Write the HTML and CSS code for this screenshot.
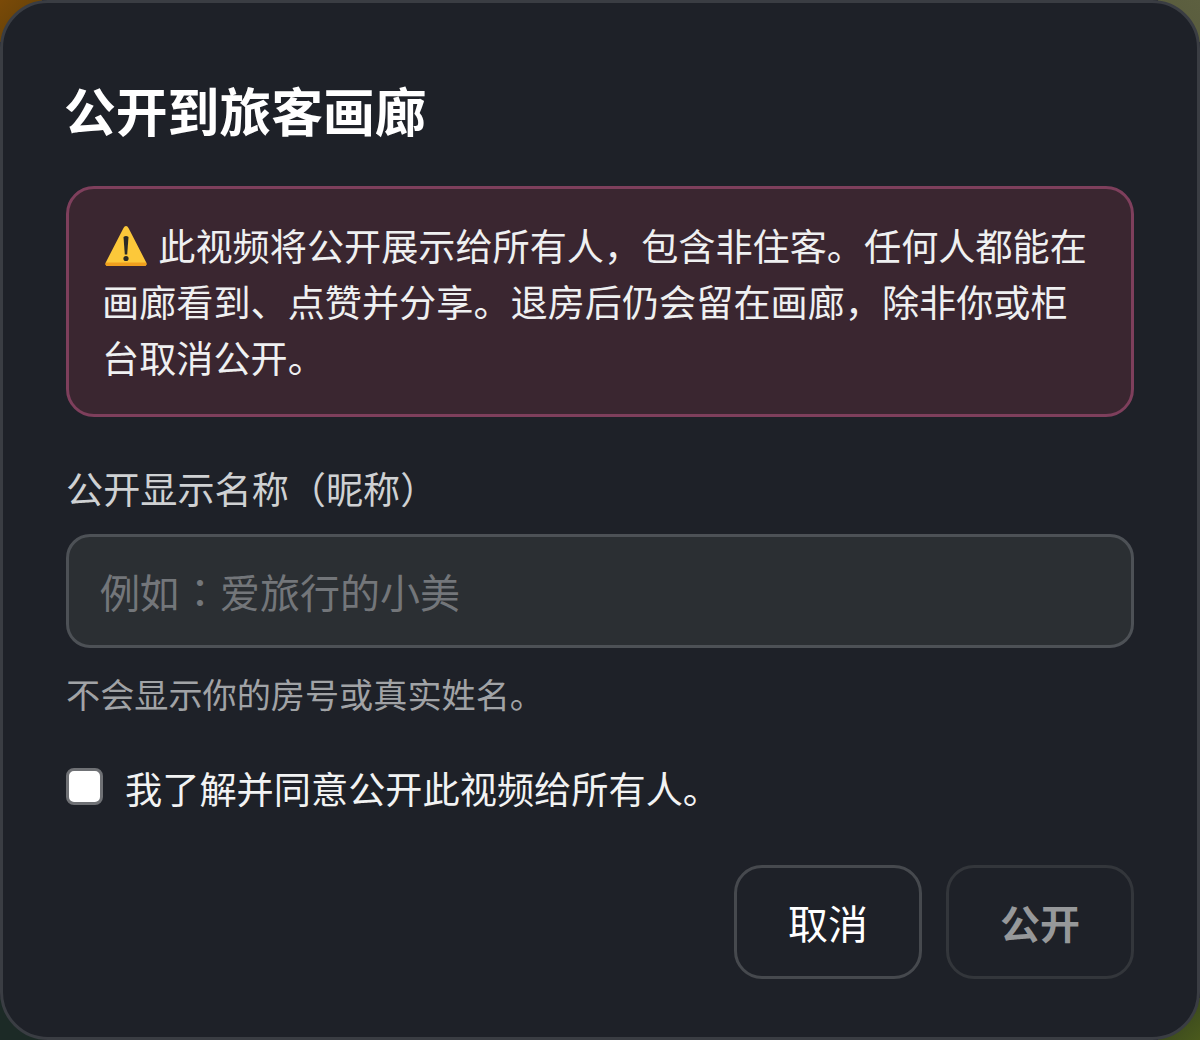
FILE: index.html
```html
<!DOCTYPE html>
<html lang="zh-CN">
<head>
    <meta charset="UTF-8">
    <meta name="viewport" content="width=device-width, initial-scale=1.0">
    <title>公开到旅客画廊</title>
    <link rel="stylesheet" href="styles.css">
</head>
<body>
    <div class="modal">
        <h2 class="modal-title">公开到旅客画廊</h2>

        <!-- Warning -->
        <div class="warning">
            <svg class="warning-icon" viewBox="0 0 42 42" aria-hidden="true">
                <path d="M21 1 Q22.5 1 23.5 3 L41 37 Q42.5 41 39 41 L3 41 Q-0.5 41 1 37 L18.5 3 Q19.5 1 21 1 Z" fill="#fcc83a"/>
                <path d="M0.8 37.5 Q-0.5 41 3 41 L39 41 Q42.5 41 41.2 37.5 Z" fill="#ef9f1e"/>
                <path d="M18.5 12 Q21 10 23.5 12 L22.2 29.5 L19.8 29.5 Z" fill="#2c2a26"/>
                <circle cx="21" cy="33.5" r="2.6" fill="#2c2a26"/>
            </svg>
            此视频将公开展示给所有人，包含非住客。任何人都能在画廊看到、点赞并分享。退房后仍会留在画廊，除非你或柜台取消公开。
        </div>

        <label class="field-label" for="nickname">公开显示名称（昵称）</label>
        <input id="nickname" class="field-input" lang="zh-TW" type="text" placeholder="例如：爱旅行的小美">
        <p class="field-hint">不会显示你的房号或真实姓名。</p>

        <label class="agree">
            <span class="agree-box"></span>
            <span>我了解并同意公开此视频给所有人。</span>
        </label>

        <div class="actions">
            <button class="btn">取消</button>
            <button class="btn btn-disabled">公开</button>
        </div>
    </div>
</body>
</html>
```

FILE: styles.css
```css
html, body {
    margin: 0;
    padding: 0;
    height: 100%;
}
body {
    font-family: "Liberation Sans", "Noto Sans CJK SC", sans-serif;
    background:
        linear-gradient(135deg, #7a4a08 0, #6b4408 30px, transparent 30px),
        linear-gradient(225deg, #5d6040 0, #5a5d3e 30px, transparent 30px),
        linear-gradient(45deg, #1c2a26 0, #1c2a26 30px, transparent 30px),
        linear-gradient(315deg, #4a5a1c 0, #3c4a1e 30px, transparent 30px),
        #1e2128;
}
.modal {
    box-sizing: border-box;
    width: 1200px;
    height: 1040px;
    padding: 83px 63px 0;
    background: #1e2128;
    border: 3px solid #3a3d43;
    border-radius: 48px;
    color: #fff;
}
.modal-title {
    margin: 0 0 44px -2px;
    font-size: 51.8px;
    line-height: 56px;
    font-weight: 700;
}
.warning {
    box-sizing: border-box;
    height: 231px;
    padding: 31px 33px 0;
    background: #3a2630;
    border: 3px solid #7e3f5c;
    border-radius: 28px;
    font-size: 37.15px;
    line-height: 56px;
    color: #eff0f1;
}
.warning-icon {
    width: 42px;
    height: 42px;
    margin: 0 1px 0 3px;
    vertical-align: -6px;
}
.field-label {
    display: block;
    margin-top: 46px;
    font-size: 37.15px;
    line-height: 56px;
    color: #cfd1d3;
}
.field-input {
    display: block;
    box-sizing: border-box;
    width: 100%;
    height: 114px;
    margin-top: 15px;
    padding: 6px 31px 0;
    background: #2b2f33;
    border: 3px solid #4d5156;
    border-radius: 24px;
    font-family: "Liberation Sans", "Noto Sans CJK TC", sans-serif;
    font-size: 40px;
    color: #fff;
    outline: none;
}
.field-input::placeholder {
    color: #73767a;
    opacity: 1;
}
.field-hint {
    margin: 24px 0 0;
    font-size: 34.15px;
    line-height: 48px;
    color: #a1a3a6;
}
.agree {
    display: flex;
    align-items: center;
    gap: 22px;
    margin-top: 43px;
    font-size: 37.2px;
    line-height: 56px;
    color: #f2f3f3;
}
.agree-box {
    box-sizing: border-box;
    width: 37px;
    height: 37px;
    margin-top: -10px;
    background: #fff;
    border: 3px solid #6f7175;
    border-radius: 8px;
}
.actions {
    display: flex;
    justify-content: flex-end;
    gap: 24px;
    margin-top: 46px;
}
.btn {
    box-sizing: border-box;
    width: 188px;
    height: 114px;
    background: transparent;
    border: 3px solid #46494e;
    border-radius: 28px;
    font-family: inherit;
    font-size: 40px;
    color: #fff;
}
.btn-disabled {
    border-color: #33363b;
    color: #96989a;
    font-weight: 700;
}
```
